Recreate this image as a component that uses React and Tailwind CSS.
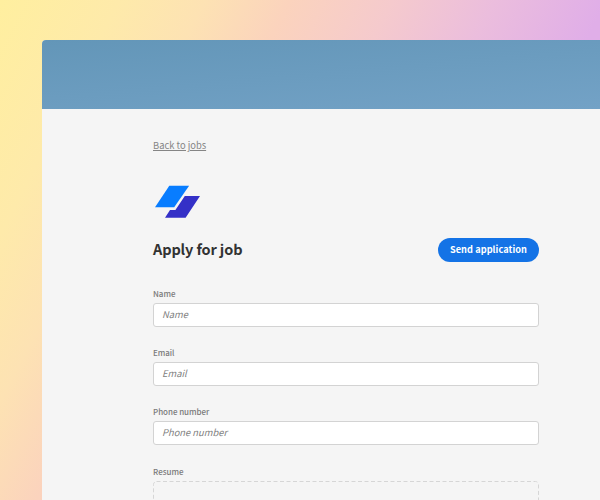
const fields = ["Name", "Email", "Phone number"];

function Logo() {
  return (
    <svg className="mt-8 block h-[34px] w-12" viewBox="0 0 48 34">
      <path d="M16.3 0.7H36.1L21.2 22.3H2Z" fill="#087dff" />
      <path d="M31.8 11H47L32.6 32.7H12L17 25H22.4Z" fill="#3430c7" />
    </svg>
  );
}

function DropZone() {
  return (
    <svg className="block h-20 w-full" viewBox="0 0 386 80">
      <rect x="0.5" y="0.5" width="385" height="79" rx="3" fill="none" stroke="#d6d6d6" strokeDasharray="4 2.5" />
    </svg>
  );
}

export default function App() {
  return (
    <div className="h-[500px] w-[600px] overflow-hidden bg-[linear-gradient(117deg,#ffef9f_0%,#feeaaa_14%,#fde2b3_24%,#fbd3bd_34%,#f5cacd_46%,#ebbddd_58%,#e0aee8_71%)] pt-10 pl-[42px] font-['Noto_Sans_CJK_SC',sans-serif]">
      <div className="h-[460px] overflow-hidden rounded-tl-[4px] bg-[#f5f5f5]">
        <div className="h-[69px] bg-[linear-gradient(175deg,#6396b8,#73a2c6)]" />
        <main className="ml-[111px] w-[386px] pt-7">
          <a className="block w-fit text-[9.4px] leading-4 text-[#858585] underline">Back to jobs</a>
          <Logo />
          <div className="mt-[19px] flex h-6 items-center justify-between">
            <h1 className="pb-0.5 text-[14.5px] leading-[22px] font-bold tracking-[-0.12px] text-[#323232]">Apply for job</h1>
            <button className="h-6 w-[101px] rounded-full bg-[#1473e6] pb-0.5 text-[9.2px] leading-[22px] font-bold tracking-[0.06px] text-white">
              Send application
            </button>
          </div>
          <form className="mt-[26px]">
            {fields.map((label) => (
              <label key={label} className="block h-[59.2px]">
                <span className="block h-[15px] text-[8px] leading-3 font-medium tracking-[-0.04px] text-[#7a7a7a]">{label}</span>
                <span className="flex h-6 items-center rounded-[3px] border border-[#d3d3d3] bg-white pb-0.5 pl-2 text-[9.4px] leading-5 text-[#808080] italic">
                  {label}
                </span>
              </label>
            ))}
            <div className="h-[15px] text-[8px] leading-3 font-medium text-[#7a7a7a]">Resume</div>
            <DropZone />
          </form>
        </main>
      </div>
    </div>
  );
}
